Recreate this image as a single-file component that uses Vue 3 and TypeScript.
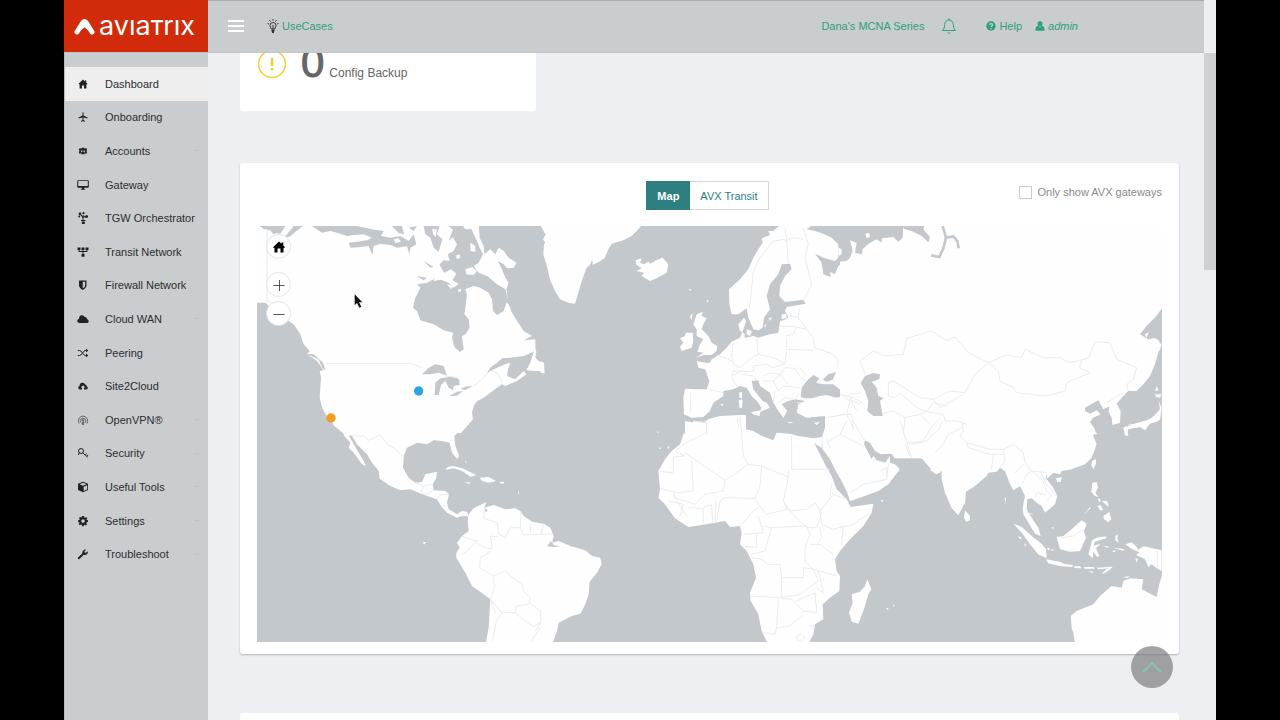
<script setup lang="ts">
import { ref } from 'vue'

interface NavItem {
  label: string
  icon: string
  arrow?: boolean
}

const nav: NavItem[] = [
  { label: 'Dashboard', icon: 'home' },
  { label: 'Onboarding', icon: 'plane' },
  { label: 'Accounts', icon: 'users', arrow: true },
  { label: 'Gateway', icon: 'desktop' },
  { label: 'TGW Orchestrator', icon: 'orchestrator' },
  { label: 'Transit Network', icon: 'transit', arrow: true },
  { label: 'Firewall Network', icon: 'shield', arrow: true },
  { label: 'Cloud WAN', icon: 'cloud', arrow: true },
  { label: 'Peering', icon: 'shuffle' },
  { label: 'Site2Cloud', icon: 'upload' },
  { label: 'OpenVPN®', icon: 'vpn', arrow: true },
  { label: 'Security', icon: 'key', arrow: true },
  { label: 'Useful Tools', icon: 'cube', arrow: true },
  { label: 'Settings', icon: 'gear', arrow: true },
  { label: 'Troubleshoot', icon: 'wrench', arrow: true },
]

const view = ref<'map' | 'transit'>('map')
const onlyGateways = ref(false)

interface Region {
  x: number
  y: number
  land?: string[]
  water?: string[]
  islands?: string[]
  rivers?: string[]
  borders?: string[]
}

const regions: Region[] = [
  {
    // North America
    x: 0,
    y: -15,
    land: [
      'M0 10H665L668 50 680 75 682 100 700 85 715 100 725 80 740 90 755 110 778 125 770 140 750 142 740 130 722 120 735 145 745 170 755 185 748 205 752 230 745 240 755 250 765 275 780 300 800 330 825 345 800 358 835 355 835 380 838 392 835 410 855 430 862 450 835 450 808 448 820 425 830 392 800 405 760 410 735 412 720 425 700 440 690 455 720 440 745 430 760 425 752 450 750 465 775 475 800 450 808 460 780 480 745 495 735 490 720 500 700 515 680 530 660 540 650 555 645 575 648 595 635 610 612 636H258L232 615 222 600 205 578 195 560 188 530 190 500 192 470 188 450 200 448 180 420 150 400 158 390 140 370 130 340 110 310 95 300 75 300 60 280 30 250 25 245H0Z',
      'M860 10H905V225L895 200 880 180 870 110 862 90 870 72 858 55 866 40Z',
    ],
    water: [
      'M8 15H85L70 38 58 36 50 40 40 28 20 24Z',
      'M110 15H138L118 30 100 46 82 50 98 30Z',
      'M165 15H300L345 25 380 30 372 45 400 50 430 45 455 60 470 40 478 70 460 80 457 100 450 76 420 80 400 72 370 68 350 75 346 103 335 75 310 78 280 80 275 65 300 62 330 58 345 50 320 40 290 42 270 45 240 35 220 30 195 35Z',
      'M404 15H434L442 40 425 36Z',
      'M455 20L480 15 470 30Z',
      'M500 15H548L540 40 556 55 545 92 530 80 520 50 505 40Z',
      'M575 15H640L650 40 660 60 668 80 678 100 665 125 650 135 665 155 690 165 720 190 745 205 752 235 740 270 720 282 708 270 705 235 695 215 670 200 650 195 625 205 630 220 625 260 622 280 635 295 638 320 625 340 615 345 620 385 608 393 592 378 585 350 588 335 560 328 530 310 505 302 490 298 480 270 468 260 475 230 490 200 480 190 510 185 530 175 545 150 548 130 560 118 578 120 572 100 590 90 600 70 588 50 598 35Z',
      'M500 120L530 138 520 140ZM478 165L510 170 500 178ZM590 20L575 60 598 40Z',
      'M495 460L515 440 535 430 560 435 570 464 545 455 520 460Z',
      'M533 522L535 485 550 472 575 468 592 468 606 475 608 492 590 495 588 508 575 500 565 480 552 492 545 522Z',
      'M576 526L600 512 618 510 600 524ZM610 504L625 497 648 495 625 507Z',
      'M98 306L130 350 125 352 115 345 120 375 104 350ZM146 398L170 400 198 425 206 448 196 440 184 415Z',
    ],
    islands: [
      'M546 130L562 155 582 145 598 158 586 178 605 188 590 200 575 185 552 176 530 180Z',
      'M640 65L655 75 655 92 640 90ZM625 145L645 138 660 150 650 162 628 160ZM610 5L640 12 645 25 625 25ZM570 190L590 194 582 204ZM604 204L612 204 612 212 604 212Z',
      'M596 104L608 100 610 110 600 114ZM525 25L540 25 536 48 530 42ZM410 55L425 52 432 62 415 66Z',
    ],
    borders: ['M30 25V240L50 246 80 290 96 300', 'M205 428H465L497 441', 'M568 465L600 470M650 495L668 480 700 450 712 452 725 460 735 485'],
  },
  {
    // Central and South America
    x: 0,
    y: 615,
    land: [
      'M254 -5H612L592 15 595 45 607 75 600 83 585 65 578 35 555 30 530 28 510 40 480 35 450 50 440 75 438 110 455 140 475 155 495 153 505 130 540 122 538 140 527 160 530 178 565 180 576 190 570 215 575 235 600 250 615 240 630 242 637 262 628 255 612 256 600 260 570 245 552 225 540 205 510 195 485 185 460 175 430 178 400 165 368 143 365 120 345 95 330 70 300 40 285 15 275 12 290 40 305 65 320 90 327 105 315 100 290 65 275 50 280 35 262 15Z',
      'M635 250L650 232 670 222 688 213 682 230 710 222 745 235 775 232 790 240 800 255 825 272 860 278 880 290 890 315 885 335 905 330 940 345 985 358 1005 375 1030 380 1034 400 1020 425 998 452 995 490 985 520 970 548 945 555 905 575 900 600 885 640H686L695 590 700 505 680 490 645 465 625 425 598 380 598 365 608 350 600 335 615 315 635 300 632 270Z',
      'M565 117L572 108 590 105 620 113 658 133 640 137 615 120 590 112ZM668 140L695 138 717 150 695 155 675 150ZM622 154L640 154 636 159ZM728 152L742 152 740 158 728 157ZM498 332L508 334 501 341ZM624 85L630 98 626 96ZM783 175L787 190 784 188Z',
    ],
    water: ['M682 230L692 238 686 245Z', 'M870 346L882 330 890 342 908 346 890 348Z'],
    borders: [
      'M285 15L320 15 335 28 370 12 390 40 410 50 440 78',
      'M475 155L500 165 525 160M500 165L490 185 510 190 527 178M540 205L550 192 575 190M552 222L568 224',
      'M682 235L680 262 720 275 725 310 745 320 760 290 790 290 800 312 845 310 885 308M792 240L790 290M822 275L820 305M860 280L852 308',
      'M615 315L640 325 660 330 625 365 608 372M650 332L690 352 705 352 700 315 725 318M703 360L670 380 668 410 710 435 745 420 760 435 795 460 800 482 820 500 815 520 778 525 775 545 735 545 700 505 712 470 710 435M735 545L718 570 705 635M775 545L810 575 830 585 852 575 850 540 818 515M835 600L852 575M850 590L820 635M700 505L715 545',
    ],
  },
  {
    // Greenland, Iceland and Europe
    x: 849,
    y: -15,
    land: [
      'M0 10H308L292 28 275 45 250 58 215 68 205 85 195 110 178 122 158 132 157 115 150 132 140 140 125 180 115 215 105 248 85 245 60 235 45 210 30 175 22 140 10 100 12 70 25 55 35 35 15 38Z',
      'M722 10L700 30 685 30 690 42 665 52 668 65 655 85 640 110 625 145 600 175 567 205 568 250 575 280 595 280 620 262 625 290 640 325 655 328 668 320 672 290 690 265 685 245 680 225 690 190 715 160 725 130 750 128 755 145 735 165 720 195 718 225 735 243 790 236 797 248 740 258 735 270 745 290 730 298 720 300 715 335 690 340 655 350 640 345 615 350 610 335 600 330 595 310 612 290 618 300 612 320 600 350 575 362 560 380 540 400 515 415 510 425 495 425 470 420 475 440 495 445 508 480 500 505 470 505 435 503 430 530 432 580 455 590 490 588 510 570 520 545 550 525 550 510 580 505 600 495 620 500 635 525 655 545 664 560 660 572 672 568 690 560 680 545 668 540 640 505 635 480 655 478 660 495 690 515 700 545 715 570 730 590 742 570 725 550 745 540 765 535 795 540 775 550 770 575 800 590 855 585 855 640H970V10Z',
      'M286 118L305 112 300 125 312 130 325 122 332 128 348 118 368 110 385 130 380 155 350 172 330 180 305 165 312 155 290 150 305 142 290 132Z',
      'M470 280L488 272 485 285 500 292 490 310 485 325 505 345 515 365 532 375 530 390 515 402 490 402 468 410 490 395 472 392 480 370 490 355 470 345 470 325 460 310 465 295Z',
      'M438 335L458 335 460 360 455 380 425 390 420 378 430 365 420 352 434 346Z',
      'M450 285L458 276 454 298ZM598 514L606 514 606 532 598 530ZM596 536L608 536 606 560 598 560ZM632 574L662 568 658 586 640 580ZM740 602L762 604 750 607ZM822 606L840 602 830 612ZM540 550L552 550 546 556ZM620 325L636 330 630 345 620 340ZM610 335L616 342 610 344ZM686 292L696 288 690 300ZM725 280L738 278 740 292 725 294ZM672 315L678 308 676 320ZM446 204L454 204 450 210ZM500 236L506 238 503 246Z',
      'M435 640V600L465 605 500 600 560 588 614 582 618 600 614 625 650 640Z',
      'M0 420L12 425 14 458 4 455 0 450Z',
    ],
    water: [
      'M820 10H965V60L950 58 952 80 965 82V105L935 105 915 120 895 135 885 160 870 152 872 168 850 160 845 125 825 98 850 110 885 120 905 100 900 75 875 50 850 38 825 30 800 25Z',
      'M782 528L785 500 800 480 820 462 838 472 828 485 850 490 880 490 905 510 912 525 890 530 860 522 840 525 815 532 795 532Z',
      'M848 476L865 460 888 454 878 476 860 482Z',
      'M465 592L500 590 495 604 468 602Z',
    ],
    islands: ['M932 62L950 60 952 90 935 100Z'],
    borders: [
      'M735 20L740 60 745 128M735 55L700 60 660 110 640 150 635 200 628 265',
      'M790 20L805 70 795 110 815 190 790 240M735 60L760 50 790 55',
      'M778 260L775 290 800 325 820 350 825 380 880 400 895 420 890 445M740 282L775 290M718 315L770 318 800 325M735 345L760 340 770 320M740 350V385L820 388',
      'M650 350L655 400 635 410 600 440 580 430 575 405 580 365M530 402L555 410 575 420M580 465L600 450 640 452 640 435 680 430 700 440 735 428 740 390M655 400L700 410 735 428',
      'M508 505L550 515M452 515V575M590 495L575 470 580 450 605 450M605 460L640 465 650 478M670 465L690 455 720 460 735 440 765 442 782 470 800 478M665 480L700 480 715 510 730 495 780 500M700 480L720 460 745 490M700 545L705 510M715 545L735 530 765 535 775 520M780 440L800 465',
      'M498 600L500 640M592 588L595 620M770 545H785M855 590L920 580 930 540 910 525M920 580L940 620M925 520L965 515M930 535L960 550',
    ],
  },
  {
    // Asia, north
    x: 1749,
    y: -15,
    land: [
      'M0 10H970V265L945 290 920 315 900 340 925 355 945 350 958 360 955 390 945 430 930 465 910 490 890 510 865 510 850 525 830 548 842 570 840 605 818 612 815 590 806 572 808 556 790 565 775 538 755 548 735 560 735 570 750 578 770 568 782 580 760 590 748 605 758 618 772 640H0Z',
      'M956 540L960 565 948 578 935 590 920 598 905 602 890 606 865 616 850 630 878 622 900 618 915 628 930 608 950 602 960 596 965 560ZM944 516L965 518 960 530 948 528Z',
      'M952 360L965 370 958 392 965 470 950 470 948 430Z',
    ],
    water: [
      'M-5 10H190L188 50 175 62 160 48 125 52 125 65 110 55 85 68 68 85 65 100 45 95 50 65 30 58 38 90 30 110 20 120-5 122Z',
      'M185 10H256L250 25 270 48 265 64 245 45 215 30 192 24Z',
      'M62 485L75 465 100 456 120 460 118 475 95 482 110 500 115 525 130 530 120 540 128 585 100 585 82 570 85 540 75 510Z',
      'M915 340L928 335 925 352Z',
      'M966 262L945 290 920 315 902 340 925 355 945 350 966 362Z',
      'M946 428L956 390 966 385V520H946Z',
    ],
    islands: ['M76 38L88 36 90 48 80 52ZM-5 80L5 85 5 100-5 105Z', 'M945 510L950 496 956 508Z', 'M914 340L926 334 920 350Z'],
    rivers: ['M308 15L318 50 310 82 298 108 274 103', 'M318 50L340 46 352 60 356 82'],
    borders: [
      'M75 460L60 420 100 390 135 405 190 400 200 352 275 330 320 358 345 348 385 395 445 425 405 460 375 515 330 510 280 535 240 530 160 480 145 485V525L165 530 180 515 230 560 260 572M445 425L500 402 545 410 555 385 610 410 660 410 690 425 745 412 765 362 810 365 830 415 890 440 880 475 860 490 865 510',
      'M445 425L475 450 480 480 520 500 530 515 615 525 675 510 680 485 750 455 718 440 725 420',
      'M280 535L300 560 370 520M260 572L280 545 320 555M128 578L160 570 195 590 240 580 260 572 310 580 315 600 350 600 380 610M195 590L190 640M240 580L270 610M800 545L850 515',
      'M0 520L40 530 70 548M30 530L50 570M0 580L35 580 40 625',
    ],
  },
  {
    // Africa and Arabia
    x: 1149,
    y: 525,
    land: [
      'M160 60L185 68 205 55 240 45 300 42 318 42 318 85 340 90 365 105 400 118 410 95 450 98 475 105 520 112 548 108 545 140 535 135 522 125 535 150 555 190 575 225 590 265 620 295 632 318 700 308 695 335 670 375 630 415 600 450 585 475 590 510 600 525 598 570 570 590 548 610 550 655 525 670 520 700 505 730H384L365 690 355 640 332 600 330 575 348 530 340 490 320 450 300 430 305 395 300 375 270 378 255 360 225 365 185 372 145 378 105 352 75 310 55 290 60 265 55 210 75 175 95 150 120 130 130 100 155 75Z',
      'M555 45L555 80 545 112 548 145 570 175 590 215 605 240 622 275 630 300 660 290 715 270 745 250 780 205 765 190 750 185 750 165 735 185 712 180 700 165 695 175 690 165 672 130 675 118 690 125 705 150 720 158 750 152 765 170 845 172 865 195 885 218 900 215V45Z',
      'M682 535L694 565 685 580 672 625 655 668 635 662 627 635 638 605 635 580 660 572 675 555Z',
      'M722 298L730 298 726 304ZM738 620L746 622 742 627ZM758 612L764 612 762 617ZM56 140L64 140 60 145ZM82 138L88 136 86 145ZM50 92L56 92 54 97Z',
    ],
    borders: [
      'M160 60L200 65 200 95 140 125 105 150 135 165 100 168V215L60 212M135 155L255 238 325 190 310 165 305 100 300 45M155 180L160 270 110 275 60 262M255 238L250 270 195 280 165 310 105 290 100 275',
      'M455 105V205H570M325 190L365 195 445 228V205M365 195L360 255 345 292 255 290 240 300 230 360M445 228L430 300 440 325 380 340 355 310 345 292M430 300L450 330 500 325 525 305 545 335 530 380 500 380 440 320',
      'M145 320L190 322V370M190 318L215 312 218 365M105 290L140 345M85 300L130 310 120 345M228 300L225 362M300 375L340 330 355 320M355 345L370 395 310 400M370 375L395 380 500 375 510 400 495 440 495 480 520 505 590 525M600 380L640 370 690 335M620 295L580 280 540 330 545 370 580 385 610 375 605 430M510 430H540L580 460M540 380L545 410 530 430M575 250L570 285',
      'M335 470L365 475 385 490 420 490 425 530 490 530V500L520 505 535 540 480 580 425 590 425 530M395 380L375 450 330 460M350 400L350 440 310 435M330 585L415 590 455 595 490 630 530 635 525 575 470 600M415 595L410 680 450 675 490 640M410 680L405 700 370 695M535 510L550 575 530 560M470 710L480 698 495 708 485 720 474 720ZM508 675L520 672 518 685Z',
      'M560 125L600 100 620 60M570 140L560 115M600 100L670 135M640 60L665 105 675 118M630 275L670 250 740 235 745 190M700 175L735 185M790 90L805 140 815 170M805 130L845 125 880 70 900 50M790 90L780 60M545 112L548 145',
    ],
  },
  {
    // South-east Asia and Australia
    x: 1869,
    y: 585,
    land: [
      'M0 0H628L645 25 640 45 650 70 635 110 615 130 575 145 545 150 540 160 520 155 500 175 520 200 532 225 525 250 495 275 485 255 470 245 455 232 442 235 440 265 455 290 475 320 482 345 465 338 448 310 430 280 428 260 435 225 420 195 400 208 390 190 375 150 360 140 350 152 325 155 320 165 285 195 258 212 255 245 235 283 215 262 195 215 185 175 185 150 170 160 150 148 160 135 130 112H45L35 98 0 100Z',
      'M255 268L270 285 270 298 258 302 252 290Z',
      'M400 308L425 318 455 345 485 368 498 385 500 412 475 400 450 370 425 335Z',
      'M498 415L540 422 555 430 580 432 575 438 540 435 505 427Z',
      'M582 436L600 436 605 442 584 441ZM612 438L640 438 645 443 614 443ZM650 440L695 437 698 441 655 445ZM665 458L680 444 696 440 676 456ZM624 450L640 452 638 457Z',
      'M530 348L550 345 580 320 605 298 620 308 612 330 618 350 600 390 570 392 540 385Z',
      'M636 358L650 350 680 346 678 352 645 362 640 374 662 368 648 382 658 405 652 408 640 392 638 412 625 400 632 375Z',
      'M637 185L650 183 654 200 646 215 655 228 645 225 634 212ZM652 232L662 235 660 245ZM665 240L682 240 686 258 676 250ZM652 255L662 252 670 268 660 268ZM670 285L688 272 694 295 684 304 672 294ZM612 280L630 258 632 262Z',
      'M636 120L648 114 648 128 640 145 634 132ZM528 172L545 168 542 182 532 184Z',
      'M736 370L755 364 768 376 775 386 790 376 845 388V450L830 442 815 430 805 438 795 415 768 402 778 394 755 384ZM706 345L714 340 712 352 716 365 706 358ZM670 374L690 378 680 380ZM700 380L732 384 730 390ZM695 390L708 388 704 394ZM766 412L774 414 770 425Z',
      'M585 670L580 635 575 620 572 585 590 570 640 550 660 525 680 508 695 495 725 500 730 480 750 472 790 475 785 505 830 528 838 490 850 450V670ZM732 467L750 466 740 472Z',
      'M696 0L722 0 712 8 698 10ZM730 20L742 14 745 44 735 44ZM742 12L790 4 828-10 840-5 800 12 770 20 755 16ZM374 232L378 230 376 250ZM514 318L522 320 518 324ZM500 382L508 380 508 390ZM514 384L522 386 516 390ZM415 345L425 350 420 356ZM432 365L440 374 434 374Z',
    ],
    water: ['M500 160L502 172 496 176Z'],
    borders: [
      'M75 70L90 105M80 65L140 60 180 20 185 0M165 95L190 70 205 40 245 20M245 0L250 30 240 45 260 65 330 85 370 85 400 70 430 95 435 125 455 150 500 155M260 65L265 80 330 100 370 100M340 100L335 145M370 85L375 120 360 140M430 130L405 155M455 150L440 160 425 190M455 150L490 180 500 210 515 225 500 240M465 230L470 215 500 222M480 150L500 190 530 225M440 275L460 280M545 350L580 345 600 330 615 325M832 388V440',
      'M0 150L20 140 20 165',
    ],
  },
]
</script>

<template>
  <div class="window">
    <header class="topbar">
      <a href="#" class="brand" aria-label="Aviatrix">
        <svg class="brand-mark" viewBox="0 0 21 17" aria-hidden="true">
          <path d="M3 14 9 4.500Q10.500 2.500 12 4.500L18 14" />
          <path d="M5 12.500 10.500 8 16 12.500" class="inner" />
        </svg>
        <span>avıaтrıx</span>
      </a>
      <button type="button" class="burger" aria-label="Toggle menu"><i></i><i></i><i></i></button>
      <a href="#" class="link usecases">
        <svg viewBox="0 0 12 16" aria-hidden="true" class="bulb">
          <path d="M6 4.500a3 3 0 0 1 3 3c0 1.500-1 2-1.200 3.500H4.200C4 9.500 3 9 3 7.500a3 3 0 0 1 3-3Z" />
          <path d="M4.500 12.500h3M5 14h2" class="thick" />
          <path d="M6 1v1.500M2.500 2l1 1.500M9.500 2l-1 1.500M.5 5.500l1.500.5M11.500 5.500 10 6M6 7v4" />
        </svg>
        UseCases
      </a>
      <div class="account">
        <a href="#" class="link">Dana's MCNA Series</a>
        <button type="button" class="bell" aria-label="Notifications">
          <svg viewBox="0 0 16 18" aria-hidden="true">
            <path d="M1.500 13.500C3.500 11.500 3.500 9.500 3.700 7.500 4 4.500 5.500 3 8 3s4 1.500 4.300 4.500c.2 2 .2 4 2.200 6Z" />
            <path d="M8 3V1.500M6.500 15.500c.5 1 2.500 1 3 0" />
          </svg>
        </button>
        <a href="#" class="link help">
          <svg viewBox="0 0 10 10" aria-hidden="true">
            <circle cx="5" cy="5" r="4.700" />
            <path d="M3.500 3.900C3.600 2.200 6.600 2.200 6.600 3.900 6.600 5 5 4.900 5 6M5 7v1.200" class="knock" />
          </svg>
          Help
        </a>
        <a href="#" class="link admin">
          <svg viewBox="0 0 10 10" aria-hidden="true">
            <circle cx="5" cy="2.800" r="2.500" />
            <path d="M.5 9.800V8q0-2.700 2.500-2.900 2 1.400 4 0Q9.500 5.300 9.500 8v1.800Z" />
          </svg>
          <em>admin</em>
        </a>
      </div>
    </header>

    <nav class="sidebar" aria-label="Main">
      <ul>
        <li v-for="(item, i) in nav" :key="item.label">
          <a href="#" :class="{ active: i === 0 }">
            <svg viewBox="0 0 12 12" class="nav-icon" aria-hidden="true">
              <path v-if="item.icon === 'home'" d="M6 1.500 1.500 5.800 2.300 6.500 2.600 6.300V10.500H5V7.500H7V10.500H9.400V6.300L9.700 6.500 10.500 5.800 9.200 4.500V2.300H8V3.400Z" />
              <path v-else-if="item.icon === 'plane'" d="M5.500 1.500Q6 .8 6.500 1.500V4.600L10.500 6.600V7.400L6.500 6.500V9L8 10V10.700L6 10.300 4 10.700V10L5.500 9V6.500L1.500 7.400V6.600L5.500 4.600Z" />
              <g v-else-if="item.icon === 'users'">
                <circle cx="6" cy="4.300" r="1.700" /><circle cx="3.300" cy="4.700" r="1.400" /><circle cx="8.700" cy="4.700" r="1.400" />
                <path d="M4.300 9.300V7Q6 5.500 7.700 7V9.300ZM2 8.500V6.300L4 6V8.500ZM8 8.500V6L10 6.300V8.500Z" />
              </g>
              <path v-else-if="item.icon === 'desktop'" fill-rule="evenodd" d="M1 1.200H11Q11.800 1.200 11.800 2V8Q11.800 8.800 11 8.800H7.300V9.800L8.500 10.700H3.500L4.700 9.800V8.800H1Q.2 8.800 .2 8V2Q.2 1.200 1 1.200ZM1.200 2.100V7H10.800V2.100Z" />
              <g v-else-if="item.icon === 'orchestrator'">
                <circle cx="3" cy="2" r="1.400" /><circle cx="6.500" cy="1.200" r="1.100" /><circle cx="2.200" cy="4.500" r="1" /><circle cx="9.500" cy="4.500" r="1.500" /><circle cx="6" cy="4.500" r="1.200" />
                <path d="M4 8H8.500V9H4ZM4.600 9.500H8L7.600 12H5Z" /><path d="M3 2 6 5 9.500 4.500M6 4V8" class="line" />
              </g>
              <path v-else-if="item.icon === 'transit'" d="M.5 1.500H3.500V4H2.600V5H5.500V4H4.500V1.500H7.500V4H6.500V5H9.400V4H8.500V1.500H11.500V4H10.400V6H6.500V8H7.500V10.700H4.500V8H5.500V6H1.600V4H.5Z" />
              <path v-else-if="item.icon === 'shield'" fill-rule="evenodd" d="M2 1.500H9.500V6Q9.500 9 5.750 11 2 9 2 6ZM5.750 2.800V9.500Q8.200 8 8.200 6V2.800Z" />
              <path v-else-if="item.icon === 'cloud'" d="M2.800 10Q0 10 .3 7.600 .5 6.200 2 5.800 2 2.500 4.700 2.200 6.800 2 7.600 4 9.700 3.500 10 6 12 6.500 11.700 8.500 11.500 10 9.700 10Z" />
              <path v-else-if="item.icon === 'shuffle'" class="line" d="M.8 3.500H2.500Q4 3.500 5.500 6 7 8.500 8.500 8.500H10.500M.8 8.500H2.500Q4 8.500 5.500 6 7 3.500 8.500 3.500H10.500M9 2 10.800 3.500 9 5M9 7 10.800 8.500 9 10" />
              <path v-else-if="item.icon === 'upload'" fill-rule="evenodd" d="M3 9.500Q1 9.500 1.200 7.500 1.300 6.400 2.500 6 2.500 3 5.200 2.800 7.500 2.600 8.200 4.500 9.600 4.600 9.600 6.200 11 6.600 10.800 8 10.600 9.500 9 9.500H7V7.500H8.300L6 5.200 3.700 7.500H5V9.500Z" />
              <g v-else-if="item.icon === 'vpn'" class="soft">
                <path d="M2 9.500Q.8 7.500 1.700 5 3.200 2 6 2 8.800 2 10.300 5 11.200 7.500 10 9.500M3.500 8.500Q2.700 6.500 4 5 6 3.300 8 5 9.300 6.500 8.500 8.500" class="line" />
                <circle cx="6" cy="6.500" r="1.200" /><path d="M4.600 8H7.400L6.900 11H5.100Z" />
              </g>
              <g v-else-if="item.icon === 'key'"><circle cx="4" cy="4" r="2.500" class="line" /><path d="M1.200 8 2.500 5.500M5.800 5.800 10.800 10.300M8.300 8 9.500 6.500M9.800 9.500 11 8" class="line" /></g>
              <path v-else-if="item.icon === 'cube'" fill-rule="evenodd" d="M6 .8 11 2.800V9L6 11.300 1 9V2.800ZM6 1.800 2.500 3.200 6 4.700 9.500 3.200ZM6.700 5.700V9.900L10.200 8.300V4.300Z" />
              <path v-else-if="item.icon === 'gear'" fill-rule="evenodd" d="M5 1H7L7.300 2.400 8.300 2.800 9.500 2 10.300 3.200 9.500 4.200 9.800 5 11 5.300V7L9.700 7.300 9.300 8.200 10.100 9.400 8.800 10.500 7.700 9.700 7 10 6.800 11.300H5.200L4.900 10 4 9.600 2.800 10.300 1.700 9 2.500 8 2.200 7.200 1 6.900V5.200L2.300 4.900 2.700 4 2 2.900 3.100 1.800 4.200 2.600 4.800 2.300ZM6 4.300A1.800 1.800 0 1 0 6 7.900 1.800 1.800 0 1 0 6 4.300Z" />
              <path v-else d="M1 9.500 5.300 5.500Q4.900 3.500 6.500 2.200 7.800 1.200 9.300 1.700L7.500 3.200V4.500L8.800 4.800 10.800 3.300Q11.200 5 10 6.200 8.700 7.200 6.800 6.800L2.500 11Q1.500 11.500 1 10.800 .5 10.200 1 9.500Z" />
            </svg>
            <span>{{ item.label }}</span>
            <i v-if="item.arrow" class="chevron"></i>
          </a>
        </li>
      </ul>
    </nav>

    <main class="content">
      <section class="card backup">
        <svg viewBox="0 0 30 30" class="alert" aria-hidden="true">
          <circle cx="15" cy="15" r="13.500" />
          <path d="M15 9v8M15 19v2.500" class="mark" />
        </svg>
        <strong>0</strong>
        <span>Config Backup</span>
      </section>

      <section class="card map-card">
        <div class="toolbar">
          <div class="toggle" role="group" aria-label="View">
            <button type="button" :class="{ on: view === 'map' }" @click="view = 'map'">Map</button>
            <button type="button" :class="{ on: view === 'transit' }" @click="view = 'transit'">AVX Transit</button>
          </div>
          <label class="check">
            <input v-model="onlyGateways" type="checkbox" />
            Only show AVX gateways
          </label>
        </div>
        <div class="map">
          <svg viewBox="0 0 2715 1249" class="world" role="img" aria-label="World map">
            <g v-for="(r, i) in regions" :key="i" :transform="`translate(${r.x} ${r.y})`">
              <path v-for="(d, k) in r.land" :key="`l${k}`" :d="d" class="land" />
              <path v-for="(d, k) in r.water" :key="`w${k}`" :d="d" class="water" />
              <path v-for="(d, k) in r.islands" :key="`i${k}`" :d="d" class="land" />
              <path v-for="(d, k) in r.rivers" :key="`r${k}`" :d="d" class="river" />
            </g>
            <g v-for="(r, i) in regions" :key="`b${i}`" :transform="`translate(${r.x} ${r.y})`">
              <path v-for="(d, k) in r.borders" :key="k" :d="d" class="border" />
            </g>
            <circle cx="485" cy="495" r="14" fill="#2aa5e0" />
            <circle cx="222" cy="576" r="14" fill="#f39c1f" />
            <path d="M293 205V238L300 231 307 245 313 242 306 229H316Z" fill="#111" />
          </svg>
          <div class="controls">
            <button type="button" class="home" aria-label="Reset view">
              <svg viewBox="0 0 14 14" aria-hidden="true"><path d="M7 1.500 1 7.200 2 8 2.500 7.600V12.500H5.500V8.500H8.500V12.500H11.500V7.600L12 8 13 7.200 11.300 5.500V2.500H9.500V3.800Z" /></svg>
            </button>
            <button type="button" aria-label="Zoom in"><svg viewBox="0 0 14 14" aria-hidden="true"><path d="M1.500 7.500h11M7.500 2v11" class="stroke" /></svg></button>
            <button type="button" aria-label="Zoom out"><svg viewBox="0 0 14 14" aria-hidden="true"><path d="M1.500 7.500h11" class="stroke" /></svg></button>
          </div>
        </div>
      </section>

      <section class="card next"></section>
    </main>

    <div class="scrollbar" aria-hidden="true"><i></i></div>
    <button type="button" class="to-top" aria-label="Back to top">
      <svg viewBox="0 0 22 14" aria-hidden="true"><path d="M2 12 11 3l9 9" /></svg>
    </button>
  </div>
</template>

<style>
body {
  background: #000;
}
</style>

<style scoped>
* {
  box-sizing: border-box;
}
.window {
  position: relative;
  display: grid;
  grid-template: 53px 1fr / 144px 1fr 12px;
  height: 100vh;
  margin: 0 64px;
  overflow: hidden;
  background: #edeff3;
  color: #2b2d2f;
  font-family: "Liberation Sans", Arial, sans-serif;
  font-size: 11px;
}
button {
  padding: 0;
  border: 0;
  background: none;
  font: inherit;
}
a {
  color: inherit;
  text-decoration: none;
}
.topbar {
  z-index: 1;
  grid-column: 1 / 3;
  display: flex;
  align-items: center;
  background: #c9cdd0;
  box-shadow: inset 0 1px #a9aaaa;
  border-bottom: 1px solid #c2c5c8;
}
.brand {
  display: flex;
  align-items: center;
  gap: 4px;
  width: 144px;
  height: 52px;
  padding-left: 10px;
  background: #d22b0b;
  color: #fff;
  font: 27px/30px Inter, sans-serif;
}
.brand-mark {
  flex: none;
  width: 21px;
  height: 17px;
  fill: none;
  stroke: #fff;
  stroke-width: 5;
  stroke-linecap: round;
}
.brand-mark .inner {
  stroke-width: 2;
}
.burger {
  display: flex;
  flex-direction: column;
  gap: 3px;
  width: 16px;
  margin-left: 20px;
}
.burger i {
  height: 2px;
  background: #fff;
}
.link {
  display: flex;
  align-items: center;
  gap: 3px;
  color: #2f9f7c;
}
.usecases {
  margin-left: 23px;
}
.bulb {
  width: 12px;
  height: 16px;
  fill: none;
  stroke: #333;
}
.bulb .thick {
  stroke-width: 2;
}
.account {
  display: flex;
  align-items: center;
  margin: 0 126px 0 auto;
}
.bell {
  width: 16px;
  height: 18px;
  margin: 0 29px 0 17px;
}
.bell svg {
  display: block;
  fill: none;
  stroke: #2f9f7c;
}
.help {
  margin-right: 13px;
}
.help svg,
.admin svg {
  width: 10px;
  height: 10px;
  fill: #2f9f7c;
}
.help .knock {
  fill: none;
  stroke: #c9cdd0;
  stroke-width: 1.3;
}
.sidebar {
  background: #c9cdd0;
  border-left: 1px solid #b6babd;
}
.sidebar ul {
  display: flex;
  flex-direction: column;
  height: 504px;
  margin: 14px 0 0;
  padding: 0;
  list-style: none;
}
.sidebar li {
  flex: 1;
}
.sidebar a {
  display: flex;
  align-items: center;
  gap: 16px;
  height: 100%;
  padding: 0 9px 0 12px;
  white-space: nowrap;
}
.sidebar a.active {
  background: #eee;
}
.nav-icon {
  flex: none;
  width: 12px;
  height: 12px;
  fill: #222;
}
.line {
  fill: none;
  stroke: #222;
  stroke-width: 1;
}
.soft {
  opacity: 0.6;
}
.chevron {
  width: 4px;
  height: 1px;
  margin-left: auto;
  background: #bfc3c6;
}
.content {
  display: flex;
  flex-direction: column;
  padding: 0 25px 0 32px;
  overflow: hidden;
}
.card {
  flex: none;
  background: #fff;
  border-radius: 3px;
}
.backup {
  display: flex;
  align-items: baseline;
  gap: 5px;
  width: 296px;
  height: 98px;
  margin-top: -40px;
  padding: 26px 17px 0;
  color: #666;
  font-size: 12px;
}
.backup strong {
  font-size: 42px;
  font-weight: 400;
  line-height: 48px;
  -webkit-text-stroke: 1px #666;
}
.alert {
  align-self: flex-start;
  width: 30px;
  height: 30px;
  margin: 10px 9px 0 0;
  fill: none;
  stroke: #efcf35;
  stroke-width: 1.5;
}
.alert .mark {
  stroke-width: 2.5;
}
.map-card {
  margin-top: 52px;
  padding: 18px 17px 12px;
  box-shadow: 0 1px 2px rgba(0, 0, 0, 0.25);
}
.toolbar {
  display: grid;
  grid-template-columns: 1fr auto 1fr;
  margin-bottom: 16px;
}
.toggle {
  grid-column: 2;
  display: flex;
  height: 29px;
  margin-right: 4px;
}
.toggle button {
  padding: 0 10px;
  border: 1px solid #d3d6d8;
  color: #2d807f;
}
.toggle button + button {
  border-left: 0;
}
.toggle button.on {
  background: #2d807f;
  border-color: #2d807f;
  color: #fff;
  font-weight: 700;
}
.check {
  display: flex;
  gap: 5px;
  align-items: center;
  align-self: start;
  justify-self: end;
  height: 22px;
  color: #8a8a8a;
}
.check input {
  appearance: none;
  width: 13px;
  height: 13px;
  margin: 0;
  border: 1px solid #ccc;
  background: #fff;
}
.check input:checked {
  background: #2d807f;
}
.map {
  position: relative;
}
.world {
  display: block;
  width: 100%;
  background: #c3c8cc;
}
.land {
  fill: #fefefe;
}
.water {
  fill: #c3c8cc;
}
.river {
  fill: none;
  stroke: #c3c8cc;
  stroke-width: 8;
}
.border {
  fill: none;
  stroke: #e9ebec;
  stroke-width: 3;
  stroke-linejoin: round;
}
.controls {
  position: absolute;
  top: 8px;
  left: 9px;
  display: flex;
  flex-direction: column;
  gap: 4px;
}
.controls button {
  display: flex;
  align-items: center;
  justify-content: center;
  width: 25px;
  height: 25px;
  border: 1px solid #e2e4e5;
  border-radius: 50%;
  background: #fff;
}
.controls .home {
  margin-bottom: 9px;
}
.controls svg {
  width: 14px;
  height: 14px;
}
.controls .stroke {
  stroke: #555;
}
.next {
  height: 40px;
  margin-top: 59px;
}
.scrollbar {
  grid-area: 1 / 3 / 3 / 4;
  padding-top: 53px;
  background: #edeff3;
}
.scrollbar i {
  display: block;
  height: 217px;
  background: #cfd0d2;
}
.to-top {
  position: absolute;
  right: 43px;
  bottom: 32px;
  display: flex;
  align-items: center;
  justify-content: center;
  width: 42px;
  height: 42px;
  border-radius: 50%;
  background: rgba(125, 125, 130, 0.7);
}
.to-top svg {
  width: 22px;
  height: 14px;
  fill: none;
  stroke: #80c8b4;
  stroke-width: 2;
}
</style>
